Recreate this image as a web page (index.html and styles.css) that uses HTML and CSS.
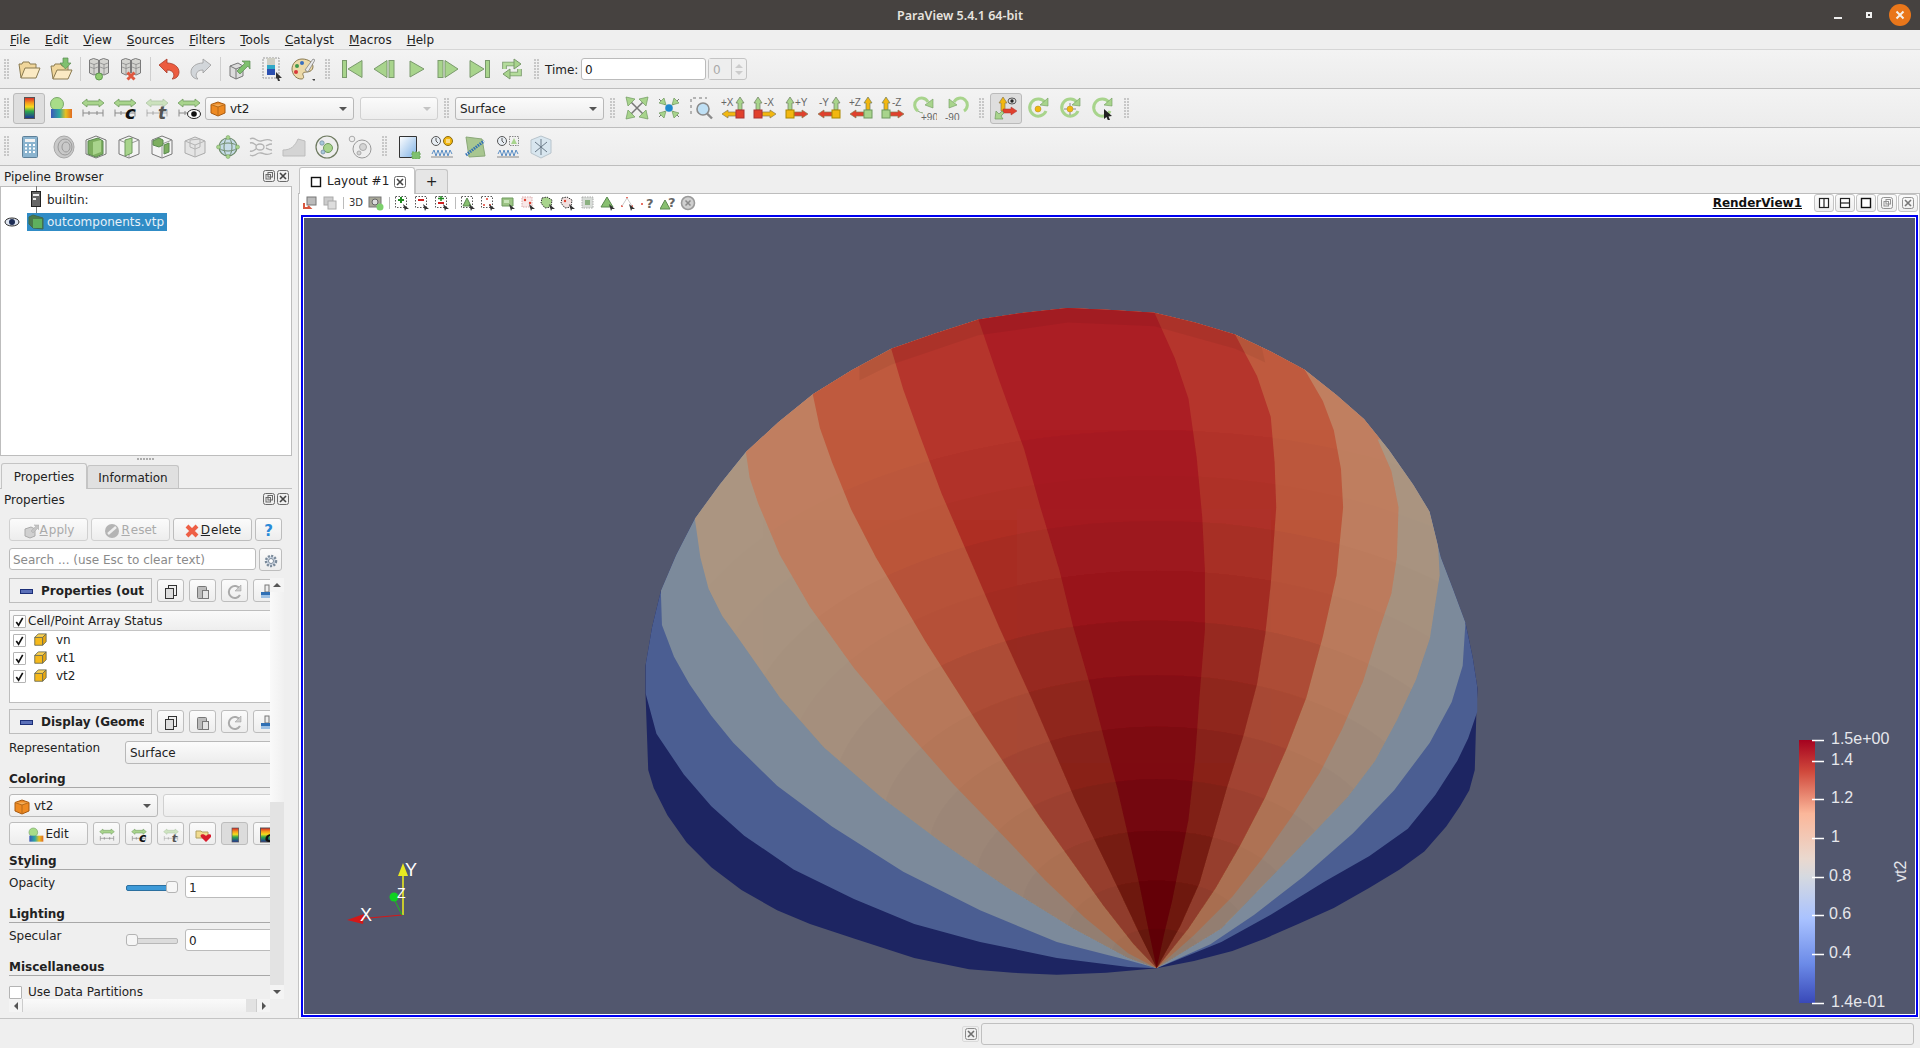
FILE: index.html
```html
<!DOCTYPE html>
<html lang="en">
<head>
<meta charset="utf-8">
<title>ParaView 5.4.1 64-bit</title>
<link rel="stylesheet" href="styles.css">
</head>
<body>
<svg class="defs" aria-hidden="true">
  <defs>
    <linearGradient id="rb" x1="0" y1="0" x2="0" y2="1"><stop offset="0" stop-color="#d8232a"/><stop offset=".25" stop-color="#f59a1c"/><stop offset=".45" stop-color="#f6dc1e"/><stop offset=".65" stop-color="#2ea84a"/><stop offset="1" stop-color="#1c2f9c"/></linearGradient>
    <linearGradient id="rbh" x1="0" y1="0" x2="1" y2="0"><stop offset="0" stop-color="#3a57b8"/><stop offset=".4" stop-color="#2ea8a0"/><stop offset=".7" stop-color="#e8c020"/><stop offset="1" stop-color="#e06a20"/></linearGradient>
    <linearGradient id="scale" x1="0" y1="0" x2="0" y2="1"><stop offset="0" stop-color="#a5021f"/><stop offset=".12" stop-color="#d0493c"/><stop offset=".28" stop-color="#fbb79a"/><stop offset=".45" stop-color="#ead8ce"/><stop offset=".52" stop-color="#d5d9e0"/><stop offset=".68" stop-color="#a9c2ff"/><stop offset=".85" stop-color="#6c8be8"/><stop offset="1" stop-color="#3949b8"/></linearGradient>
    <linearGradient id="blueg" x1="0" y1="0" x2="1" y2="1"><stop offset="0" stop-color="#ffffff"/><stop offset="1" stop-color="#7fb2e6"/></linearGradient>

    <g id="up" fill="currentColor" stroke="#6d7d60" stroke-width=".7"><polygon points="5,1 9,7 7,7 7,14 3,14 3,7 1,7"/></g>
    <g id="right" fill="currentColor" stroke="#8a7a50" stroke-width=".7"><polygon points="23,18 17,14 17,16 9,16 9,20 17,20 17,22"/></g>
    <g id="left" fill="currentColor" stroke="#8a7a50" stroke-width=".7"><polygon points="1,18 7,14 7,16 15,16 15,20 7,20 7,22"/></g>
    <g id="rule" fill="none" stroke="#8a8a8a" stroke-width="1"><path d="M2 17h20M2 13.500v7M8 15v4M16 15v4M22 13.500v7"/></g>
    <polygon id="dbl" fill="#a8d48c" stroke="#6f9a5e" stroke-width=".8" points="1,7 6,3 6,5 18,5 18,3 23,7 18,11 18,9 6,9 6,11"/>
    <path id="ring" fill="none" stroke="#a8d48c" stroke-width="3" d="M20 15a8.500 8.500 0 1 1-1-8.500"/>
    <polygon id="ringh" fill="#a8d48c" stroke="#6f9a5e" stroke-width=".6" points="22,2 22,10 14,9"/>

    <symbol id="folder-open" viewBox="0 0 24 24"><path d="M4 21 2 7h3l1-2h6l1 2h6v5" fill="#f0d69b" stroke="#8a7a50"/><path d="M4 21 8 11h15l-4 10z" fill="#fbeac4" stroke="#8a7a50"/></symbol>
    <symbol id="folder-in" viewBox="0 0 24 24"><path d="M4 22 2 9h3l1-2h6l1 2h6v4" fill="#f0d69b" stroke="#8a7a50"/><path d="M4 22 8 13h15l-4 9z" fill="#fbeac4" stroke="#8a7a50"/><path d="M14 1h5v5h3l-5.500 6L11 6h3z" fill="#7fc06f" stroke="#5a8a50" stroke-width=".7"/></symbol>
    <symbol id="srv" viewBox="0 0 24 24"><g fill="#d4d4d0" stroke="#7a7a7a"><path d="M2.500 3l4-1.500 5 1.500v13l-4.500 2-4.500-2z"/><path d="M12.500 3l4-1.500 5 1.500v13l-4.500 2-4.500-2z"/></g><path d="M3 6l4 1.500 4-1.500M13 6l4 1.500 4-1.500M3 10l4 1.500 4-1.500M13 10l4 1.500 4-1.500M7 7v10M17 7v10" fill="none" stroke="#8a8a8a" stroke-width=".8"/><circle cx="12" cy="19.500" r="3.500" fill="#90cc70" stroke="#5e9a50"/></symbol>
    <symbol id="srvx" viewBox="0 0 24 24"><g fill="#d4d4d0" stroke="#7a7a7a"><path d="M2.500 3l4-1.500 5 1.500v13l-4.500 2-4.500-2z"/><path d="M12.500 3l4-1.500 5 1.500v13l-4.500 2-4.500-2z"/></g><path d="M3 6l4 1.500 4-1.500M13 6l4 1.500 4-1.500M3 10l4 1.500 4-1.500M13 10l4 1.500 4-1.500M7 7v10M17 7v10" fill="none" stroke="#8a8a8a" stroke-width=".8"/><path d="M8.500 15.500l7 7M15.500 15.500l-7 7" stroke="#e0583f" stroke-width="3"/></symbol>
    <symbol id="undo" viewBox="0 0 24 24"><path d="M2 8 10 2v4c7 0 12 4 12 9 0 4-3 7-7 7 3-2 3-9-5-9v3z" fill="#ec5c40" stroke="#a83a28" stroke-width=".8"/></symbol>
    <symbol id="redo" viewBox="0 0 24 24"><path d="M22 8 14 2v4C7 6 2 10 2 15c0 4 3 7 7 7-3-2-3-9 5-9v3z" fill="#d2d6da" stroke="#9a9a9a" stroke-width=".8"/></symbol>
    <symbol id="state" viewBox="0 0 24 24"><path d="M3 9 11 6l5 3v10l-7 3-6-3z" fill="#dcdcdc" stroke="#777"/><path d="M3 9l6 3v10M9 12l7-3" fill="none" stroke="#777"/><path d="M10 14 18 6l-3-2h8v8l-2-3-8 8z" fill="#7fc06f" stroke="#5a8a50" stroke-width=".7"/></symbol>
    <symbol id="pick" viewBox="0 0 24 24"><rect x="4" y="1" width="16" height="20" fill="none" stroke="#999" stroke-dasharray="2 1"/><rect x="8" y="1" width="8" height="7" fill="#cfcfc4"/><rect x="8" y="8" width="8" height="10" fill="#2a4fb0"/><rect x="8" y="8" width="8" height="4" fill="#30a8c8"/><path d="M17 15l6 6-3 0 1 3-2 0-1-3-1 1z" fill="#333"/></symbol>
    <symbol id="palette" viewBox="0 0 24 24"><path d="M11 2C5 2 1 7 1 12s4 10 9 10c3 0 3-2 2-4s1-3 4-3 6-2 6-5c0-5-5-8-11-8z" fill="#ecd9a8" stroke="#8a7a50"/><circle cx="6" cy="9" r="2" fill="#3f9a4a"/><circle cx="11" cy="6" r="2" fill="#3a6fc0"/><circle cx="5" cy="15" r="2" fill="#d8383a"/><path d="M14 13 22 2l2 1-7 12z" fill="#e8e8e8" stroke="#777" stroke-width=".7"/><path d="M21 22h4l-2 2z" fill="#444"/></symbol>
    <symbol id="v-first" viewBox="0 0 24 24"><g fill="#a8d48c" stroke="#7a9a6c"><rect x="2.500" y="3.500" width="4" height="17"/><polygon points="22,3.500 8,12 22,20.500"/></g></symbol>
    <symbol id="v-prev" viewBox="0 0 24 24"><g fill="#a8d48c" stroke="#7a9a6c"><polygon points="15,3.500 2,12 15,20.500"/><rect x="17" y="3.500" width="5" height="17"/></g></symbol>
    <symbol id="v-play" viewBox="0 0 24 24"><polygon points="6,4 20,12 6,20" fill="#a8d48c" stroke="#7a9a6c"/></symbol>
    <symbol id="v-next" viewBox="0 0 24 24"><g fill="#a8d48c" stroke="#7a9a6c"><rect x="2" y="3.500" width="5" height="17"/><polygon points="9,3.500 22,12 9,20.500"/></g></symbol>
    <symbol id="v-last" viewBox="0 0 24 24"><g fill="#a8d48c" stroke="#7a9a6c"><polygon points="2,3.500 16,12 2,20.500"/><rect x="17.500" y="3.500" width="4" height="17"/></g></symbol>
    <symbol id="v-loop" viewBox="0 0 24 24"><g fill="none" stroke-linejoin="miter"><path d="M4.500 12V7H15M19.500 12v5H9" stroke="#7a9a6c" stroke-width="4.600"/><path d="M4.500 12V7H15M19.500 12v5H9" stroke="#b4dc9c" stroke-width="2.800"/></g><polygon points="14,2 21,7 14,12" fill="#a8d48c" stroke="#7a9a6c"/><polygon points="10,12 3,17 10,22" fill="#a8d48c" stroke="#7a9a6c"/></symbol>
    <symbol id="legend" viewBox="0 0 24 24"><rect x="7.500" y="1.500" width="10" height="21" fill="url(#rb)" stroke="#555"/></symbol>
    <symbol id="lut" viewBox="0 0 24 24"><circle cx="8" cy="8" r="6.500" fill="#a8dc88" stroke="#7aa86a"/><rect x="2" y="13" width="21" height="9" fill="url(#rbh)"/></symbol>
    <symbol id="r-a" viewBox="0 0 24 24"><use href="#dbl"/><use href="#rule"/></symbol>
    <symbol id="r-c" viewBox="0 0 24 24"><use href="#dbl"/><use href="#rule"/><text x="12" y="23" class="ic-c">c</text></symbol>
    <symbol id="r-t" viewBox="0 0 24 24"><use href="#dbl" opacity=".5"/><use href="#rule" opacity=".6"/><text x="13" y="23" class="ic-t">t</text></symbol>
    <symbol id="r-e" viewBox="0 0 24 24"><use href="#dbl"/><use href="#rule"/><ellipse cx="17" cy="18" rx="6.500" ry="4.500" fill="#fff" stroke="#222"/><circle cx="17" cy="18" r="2.800" fill="#111"/></symbol>
    <symbol id="reset" viewBox="0 0 24 24"><path d="M5 5l14 14M19 5 5 19" stroke="#777" stroke-width="1.500"/><g fill="#a8d48c" stroke="#6f9a5e" stroke-width=".7"><polygon points="1,1 10,3 3,10"/><polygon points="23,1 14,3 21,10"/><polygon points="1,23 3,14 10,21"/><polygon points="23,23 21,14 14,21"/></g></symbol>
    <symbol id="zoomin" viewBox="0 0 24 24"><path d="M2 3l6 6M22 3l-6 6M2 21l6-6M22 21l-6-6" stroke="#777"/><g fill="#a8d48c" stroke="#6f9a5e" stroke-width=".7"><polygon points="9,9 2,7 7,2"/><polygon points="15,9 22,7 17,2"/><polygon points="9,15 2,17 7,22"/><polygon points="15,15 22,17 17,22"/></g><circle cx="12" cy="12" r="3.800" fill="#2089cc"/></symbol>
    <symbol id="zoombox" viewBox="0 0 24 24"><path d="M2 18V2h16" fill="none" stroke="#777" stroke-dasharray="3 3"/><circle cx="14" cy="13" r="6" fill="#bfe0f5" stroke="#8a8a8a" stroke-width="1.600"/><path d="M18 17.500l5 5" stroke="#8a8a8a" stroke-width="2.400"/></symbol>
    <symbol id="ax-px" viewBox="0 0 24 24"><use href="#up" x="14" color="#a8d48c"/><use href="#left" color="#f2b70f"/><rect x="15" y="14" width="8" height="8" fill="#e0402c" stroke="#a33"/><text x="0" y="10" class="ic-l">+X</text></symbol>
    <symbol id="ax-nx" viewBox="0 0 24 24"><use href="#up" color="#a8d48c"/><use href="#right" color="#f2b70f"/><rect x="1" y="14" width="8" height="8" fill="#e0402c" stroke="#a33"/><text x="11" y="10" class="ic-l">-X</text></symbol>
    <symbol id="ax-py" viewBox="0 0 24 24"><use href="#up" color="#a8d48c"/><use href="#right" color="#e0402c"/><rect x="1" y="14" width="8" height="8" fill="#f2b70f" stroke="#a80"/><text x="10" y="10" class="ic-l">+Y</text></symbol>
    <symbol id="ax-ny" viewBox="0 0 24 24"><use href="#up" x="14" color="#a8d48c"/><use href="#left" color="#e0402c"/><rect x="15" y="14" width="8" height="8" fill="#f2b70f" stroke="#a80"/><text x="2" y="10" class="ic-l">-Y</text></symbol>
    <symbol id="ax-pz" viewBox="0 0 24 24"><use href="#up" x="14" color="#f2b70f"/><use href="#left" color="#e0402c"/><rect x="15" y="14" width="8" height="8" fill="#a8d48c" stroke="#6f9a5e"/><text x="0" y="10" class="ic-l">+Z</text></symbol>
    <symbol id="ax-nz" viewBox="0 0 24 24"><use href="#up" color="#f2b70f"/><use href="#right" color="#e0402c"/><rect x="1" y="14" width="8" height="8" fill="#a8d48c" stroke="#6f9a5e"/><text x="11" y="10" class="ic-l">-Z</text></symbol>
    <symbol id="rot-p" viewBox="0 0 24 24"><path d="M5 15a7 7 0 1 1 10-9" fill="none" stroke="#a8d48c" stroke-width="3"/><path d="M5 15a8.500 8.500 0 0 0 5 2" fill="none" stroke="#8aa87a"/><polygon points="20,3 20,12 12,9" fill="#a8d48c" stroke="#6f9a5e" stroke-width=".6"/><text x="8" y="25" class="ic-l">+90</text></symbol>
    <symbol id="rot-n" viewBox="0 0 24 24"><path d="M19 15a7 7 0 1 0-10-9" fill="none" stroke="#a8d48c" stroke-width="3"/><polygon points="4,3 4,12 12,9" fill="#a8d48c" stroke="#6f9a5e" stroke-width=".6"/><text x="0" y="25" class="ic-l">-90</text></symbol>
    <symbol id="orient" viewBox="0 0 24 24"><polygon points="9,1 13,7 11,7 11,15 7,15 7,7 5,7" fill="#f2b70f" stroke="#8a7a50" stroke-width=".7"/><polygon points="23,15 17,11 17,13 9,13 9,17 17,17 17,19" fill="#e0402c" stroke="#a33" stroke-width=".5"/><polygon points="1,23 2,15 5,18 8,15 10,17 7,20 9,23" fill="#a8d48c" stroke="#6f9a5e" stroke-width=".7"/><ellipse cx="18" cy="5" rx="4" ry="3" fill="#ddd" stroke="#555"/><circle cx="18" cy="5" r="1.700" fill="#222"/></symbol>
    <symbol id="rc1" viewBox="0 0 24 24"><use href="#ring"/><use href="#ringh"/><circle cx="12" cy="13" r="3" fill="#f2b70f" stroke="#a88a20" stroke-width=".5"/></symbol>
    <symbol id="rc2" viewBox="0 0 24 24"><use href="#ring"/><use href="#ringh"/><circle cx="12" cy="13" r="3" fill="#f2b70f" stroke="#a88a20" stroke-width=".5"/><path d="M6 13h3M15 13h3M12 7v3M12 16v3" stroke="#888"/></symbol>
    <symbol id="rc3" viewBox="0 0 24 24"><use href="#ring"/><use href="#ringh"/><path d="M14 13l8 7-3.500.5 1.500 3.500-2 .5-1.500-3.500-2.500 2z" fill="#222"/></symbol>
    <symbol id="calc" viewBox="0 0 24 24"><rect x="4.500" y="1.500" width="15" height="21" rx="1" fill="#8bb4cf" stroke="#5d7f98"/><rect x="7" y="4" width="10" height="3" fill="#f2f2f2"/><path d="M7 10h2M11 10h2M15 10h2M7 13.500h2M11 13.500h2M15 13.500h2M7 17h2M11 17h2M15 17h2" stroke="#fff" stroke-width="2"/></symbol>
    <symbol id="contour" viewBox="0 0 24 24"><ellipse cx="13" cy="12" rx="10" ry="11" fill="#c9c9c9" stroke="#a8a8a8"/><ellipse cx="14" cy="12" rx="7" ry="8" fill="none" stroke="#9a9a9a"/><ellipse cx="15" cy="12" rx="4" ry="5" fill="none" stroke="#9a9a9a"/></symbol>
    <symbol id="clip" viewBox="0 0 24 24"><path d="M12 1 22 5v14L12 23 2 19V5z" fill="#f4f4f4" stroke="#777"/><path d="M4 6 14 3l5 3v13l-7 3-8-3z" fill="#7dae5f" stroke="#5a8a50"/><path d="M9 7l8-2v12l-8 3z" fill="#a8d48c"/></symbol>
    <symbol id="slice" viewBox="0 0 24 24"><path d="M12 1 22 5v14L12 23 2 19V5z" fill="#f4f4f4" stroke="#777"/><path d="M2 5l10 4 10-4M12 9v14" fill="none" stroke="#999"/><path d="M8 5 15 3v15l-7 3z" fill="#a8d48c" stroke="#6f9a5e"/></symbol>
    <symbol id="extract" viewBox="0 0 24 24"><path d="M12 1 22 5v14L12 23 2 19V5z" fill="#f4f4f4" stroke="#777"/><path d="M2 5l10 4 10-4M12 9v14" fill="none" stroke="#999"/><path d="M3 6l6-3 4 2v5l-4 2-6-2z" fill="#7dae5f" stroke="#5a8a50"/><path d="M14 10l5-2v9l-5 2z" fill="#7dae5f" stroke="#5a8a50"/></symbol>
    <symbol id="threshold" viewBox="0 0 24 24"><path d="M12 2 22 6v12l-10 4L2 18V6z" fill="#e4e4e4" stroke="#aaa"/><path d="M2 6l10 4 10-4M12 10v12M7 5l10-1v8l-5 2-5-2z" fill="none" stroke="#b4b4b4"/></symbol>
    <symbol id="globe" viewBox="0 0 24 24"><circle cx="12" cy="12" r="9" fill="#c6dce8" stroke="#6f8a6c" stroke-width="1.200"/><ellipse cx="12" cy="12" rx="4" ry="9" fill="none" stroke="#6f8a6c"/><ellipse cx="12" cy="12" rx="9" ry="4" fill="none" stroke="#6f8a6c"/><g fill="#a8d48c" stroke="#6f9a5e" stroke-width=".5"><circle cx="12" cy="2.500" r="2"/><circle cx="12" cy="21.500" r="2"/><circle cx="2.500" cy="12" r="2"/><circle cx="21.500" cy="12" r="2"/></g></symbol>
    <symbol id="waves" viewBox="0 0 24 24"><g fill="none" stroke="#b4b4b4" stroke-width="1.400"><path d="M1 4c5-3 6 3 11 2s6-3 11 0M1 20c5 3 6-3 11-2s6 3 11 0M1 8c3-1 4 1 6 2M1 16c3 1 4-1 6-2M23 9c-3 0-4 1-6 2M23 15c-3 0-4-1-6-2"/><ellipse cx="11" cy="12" rx="4" ry="3"/></g></symbol>
    <symbol id="warp" viewBox="0 0 24 24"><path d="M1 21v-6c8 0 12-4 15-11l7 2v15z" fill="#d4d4d4" stroke="#bdbdbd"/></symbol>
    <symbol id="glyphs" viewBox="0 0 24 24"><circle cx="12" cy="12" r="11" fill="#eee" stroke="#6e7a60" stroke-width="1.200"/><circle cx="13" cy="13" r="4.500" fill="#a8d48c" stroke="#6f9a5e"/><circle cx="7" cy="8" r="2.200" fill="#a8c8dc" stroke="#6f8a9a" stroke-width=".7"/><circle cx="8" cy="17" r="2" fill="#a8c8dc" stroke="#6f8a9a" stroke-width=".7"/></symbol>
    <symbol id="glyphs2" viewBox="0 0 24 24"><circle cx="14" cy="14" r="9" fill="#eee" stroke="#999"/><circle cx="4" cy="4" r="2.800" fill="#eee" stroke="#aaa"/><circle cx="15" cy="12" r="3.500" fill="#d4d4d4" stroke="#aaa"/><circle cx="11" cy="18" r="2" fill="#d4d4d4" stroke="#aaa"/></symbol>
    <symbol id="find" viewBox="0 0 24 24"><path d="M2.500 1.500h17v16h-4v5h-13z" fill="url(#blueg)" stroke="#333"/><rect x="15" y="17" width="8" height="7" fill="#7fc06f" stroke="#6aa55c" stroke-dasharray="2 1"/></symbol>
    <symbol id="plot1" viewBox="0 0 24 24"><circle cx="6" cy="6" r="4.500" fill="#e8eef4" stroke="#555"/><path d="M6 3v3l2 2" stroke="#555" fill="none"/><circle cx="18" cy="6" r="4.500" fill="#f2b70f" stroke="#8a6a10"/><rect x="16" y="4" width="4" height="4" fill="#fff" opacity=".5"/><path d="M1 22h22" stroke="#8a8a8a"/><path d="M2 19l2-4 2 6 2-6 2 6 2-6 2 6 2-6 2 6 2-6 2 4" fill="none" stroke="#5b8ec4"/></symbol>
    <symbol id="plot2" viewBox="0 0 24 24"><polygon points="3,2 19,4 22,21 6,22" fill="#a8c690" stroke="#8aa878"/><path d="M3 20 21 6" stroke="#2f6fb4" stroke-width="3" stroke-dasharray="1.500 1"/></symbol>
    <symbol id="plot3" viewBox="0 0 24 24"><circle cx="6" cy="6" r="4.500" fill="#e8eef4" stroke="#555"/><path d="M6 3v3l2 2" stroke="#555" fill="none"/><rect x="13.500" y="1.500" width="9" height="9" fill="none" stroke="#888" stroke-dasharray="1.500 1"/><polygon points="18,3 21,9 15,9" fill="#a8d48c"/><path d="M1 22h22" stroke="#8a8a8a"/><path d="M2 19l2-4 2 6 2-6 2 6 2-6 2 6 2-6 2 6 2-6 2 4" fill="none" stroke="#5b8ec4"/></symbol>
    <symbol id="frost" viewBox="0 0 24 24"><path d="M12 1 22 5v13l-10 5L2 18V5z" fill="#d8e6ef" stroke="#b8c4cc"/><path d="M6 7l12 10M18 7 6 17M12 4v16" stroke="#6a7a88"/></symbol>

    <symbol id="floaticon" viewBox="0 0 12 12"><rect x=".5" y=".5" width="11" height="11" rx="2" fill="none" stroke="#6a6a6a"/><rect x="3" y="4.500" width="4.500" height="4.500" fill="none" stroke="#6a6a6a"/><rect x="5" y="2.500" width="4.500" height="4.500" fill="none" stroke="#6a6a6a"/></symbol>
    <symbol id="closeicon" viewBox="0 0 12 12"><rect x=".5" y=".5" width="11" height="11" rx="2" fill="none" stroke="#6a6a6a"/><path d="M3 3l6 6M9 3 3 9" stroke="#444" stroke-width="1.600"/></symbol>
    <symbol id="check" viewBox="0 0 12 12"><path d="M2.500 6.500 5 10l4.500-8" fill="none" stroke="#111" stroke-width="1.800"/></symbol>
    <symbol id="arr" viewBox="0 0 16 16"><path d="M2 5h9v9H2z" fill="#f6b91a" stroke="#6a6a50"/><path d="M2 5l4-4h9L11 5z" fill="#fad050" stroke="#6a6a50"/><path d="M11 5l4-4v9l-4 4z" fill="#e8a810" stroke="#6a6a50"/></symbol>
    <symbol id="orangecube" viewBox="0 0 16 16"><path d="M8 1 15 3.500v8.500L8 15 1 12V3.500z" fill="#ee8a22" stroke="#a85a10"/><path d="M1 3.500 8 6l7-2.500z" fill="#f4b060"/><path d="M1 3.500 8 6l7-2.500M8 6v9" fill="none" stroke="#b86a18"/></symbol>
    <symbol id="eye" viewBox="0 0 16 12"><ellipse cx="8" cy="6" rx="7" ry="4" fill="#dfe6f2" stroke="#2a2a2a"/><circle cx="8" cy="6" r="3" fill="#1d2d55"/></symbol>
    <symbol id="srvbox" viewBox="0 0 12 16"><rect x="1.500" y=".5" width="9" height="15" fill="#666" stroke="#222"/><rect x="3" y="3" width="6" height="2" fill="#eee"/><rect x="3" y="7" width="3" height="2" fill="#eee"/></symbol>
    <symbol id="greencube" viewBox="0 0 16 16"><path d="M5 1 15 4v11l-10-1L1 10V3z" fill="#4a7a4a" stroke="#3f6a4f"/><rect x="5" y="5" width="9" height="9" fill="#5eb05e"/></symbol>
    <symbol id="edge" viewBox="0 0 12 12"><rect x="1.500" y="1.500" width="9" height="9" fill="#fff" stroke="#111" stroke-width="1.400"/></symbol>
    <symbol id="split-h" viewBox="0 0 12 12"><rect x="1.500" y="1.500" width="9" height="9" fill="#fff" stroke="#222" stroke-width="1.200"/><path d="M6 1.500v9" stroke="#222" stroke-width="1.200"/></symbol>
    <symbol id="split-v" viewBox="0 0 12 12"><rect x="1.500" y="1.500" width="9" height="9" fill="#fff" stroke="#222" stroke-width="1.200"/><path d="M1.500 6h9" stroke="#222" stroke-width="1.200"/></symbol>
    <symbol id="copy" viewBox="0 0 16 16"><rect x="5.500" y="1.500" width="8" height="10" fill="#eee" stroke="#333"/><rect x="2.500" y="4.500" width="8" height="10" fill="#ddd" stroke="#333"/></symbol>
    <symbol id="paste" viewBox="0 0 16 16"><rect x="2.500" y="2.500" width="9" height="12" rx="1" fill="#bbb" stroke="#777"/><rect x="7.500" y="6.500" width="6" height="8" fill="#e4e4e4" stroke="#777"/></symbol>
    <symbol id="reload" viewBox="0 0 16 16"><path d="M13 11a6 6 0 1 1 0-6" fill="none" stroke="#aaa" stroke-width="2"/><path d="M14 1v6H8z" fill="#ccc" stroke="#999" stroke-width=".5"/></symbol>
    <symbol id="brush" viewBox="0 0 16 16"><rect x="6" y="1" width="4" height="7" fill="#eee" stroke="#777"/><rect x="2" y="8" width="12" height="3" fill="#2f6fb4"/><rect x="2" y="11" width="12" height="3" fill="#9cc0e4"/></symbol>
    <symbol id="gear" viewBox="0 0 16 16"><circle cx="8" cy="8" r="5" fill="#d4dce8" stroke="#7a8a9a" stroke-width="2.500" stroke-dasharray="2 1.300"/><circle cx="8" cy="8" r="2.500" fill="#fff" stroke="#7a8a9a"/></symbol>
    <symbol id="heart" viewBox="0 0 16 16"><path d="M1 4h5l1 1h6v6H1z" fill="#f2dc90" stroke="#b0a060"/><path d="M11 15 6 10c-2-3 3-4 5-1 2-3 7-2 5 1z" fill="#d81c2c"/></symbol>
    <symbol id="legendc" viewBox="0 0 16 16"><rect x="1.500" y="1" width="13" height="14" fill="url(#rb)" stroke="#555"/><text x="6" y="15" class="ic-c2">c</text></symbol>
    <symbol id="apply" viewBox="0 0 16 16"><path d="M2 6l6-2 4 2v7l-5 2-5-2z" fill="#d0d0d0" stroke="#aaa"/><path d="M8 8l5-5-2-1h5v5l-1-2-5 5z" fill="#c4c4c4" stroke="#aaa" stroke-width=".5"/></symbol>
    <symbol id="reseticon" viewBox="0 0 16 16"><circle cx="8" cy="8" r="7" fill="#b4b4b4"/><path d="M4 11l8-7" stroke="#eee" stroke-width="2.500"/></symbol>
    <symbol id="del" viewBox="0 0 16 16"><path d="M3 3l10 10M13 3 3 13" stroke="#ee5f45" stroke-width="4"/></symbol>

    <symbol id="s-cam" viewBox="0 0 16 16"><rect x="5" y="2" width="9" height="8" fill="#bbb" stroke="#777"/><path d="M2 8v5h6l-2-2" fill="none" stroke="#d8583f" stroke-width="2"/></symbol>
    <symbol id="s-cam2" viewBox="0 0 16 16"><rect x="2" y="2" width="9" height="8" fill="#ccc" stroke="#aaa"/><rect x="6" y="6" width="8" height="8" fill="#ddd" stroke="#aaa"/></symbol>
    <symbol id="s-shot" viewBox="0 0 16 16"><rect x="1" y="2" width="12" height="10" fill="#a8a898" stroke="#777"/><circle cx="7" cy="7" r="3" fill="#ddd" stroke="#666"/><circle cx="12" cy="12" r="3.500" fill="#7cd06c"/></symbol>
    <symbol id="s-sel" viewBox="0 0 16 16"><rect x="1.500" y="1.500" width="11" height="11" fill="none" stroke="#555" stroke-dasharray="1.500 1.500"/><path d="M4 5h6" stroke="#208a20" stroke-width="2"/><path d="M7 2v6" stroke="#208a20" stroke-width="2"/><path d="M9 9l6 5-3 0-1 2z" fill="#333"/></symbol>
    <symbol id="s-sel2" viewBox="0 0 16 16"><rect x="1.500" y="1.500" width="11" height="11" fill="none" stroke="#555" stroke-dasharray="1.500 1.500"/><path d="M4 5h6" stroke="#d02020" stroke-width="2"/><path d="M9 9l6 5-3 0-1 2z" fill="#333"/></symbol>
    <symbol id="s-sel3" viewBox="0 0 16 16"><rect x="1.500" y="1.500" width="11" height="11" fill="none" stroke="#555" stroke-dasharray="1.500 1.500"/><path d="M4 3.500h6M7 1v5" stroke="#208a20" stroke-width="1.500"/><path d="M4 8h6" stroke="#d02020" stroke-width="2"/><path d="M9 9l6 5-3 0-1 2z" fill="#333"/></symbol>
    <symbol id="s-tri" viewBox="0 0 16 16"><rect x="1.500" y="1.500" width="11" height="11" fill="none" stroke="#555" stroke-dasharray="1.500 1.500"/><polygon points="7,3 11,11 3,11" fill="#88c070" stroke="#5a8a50"/><path d="M9 9l6 5-3 0-1 2z" fill="#333"/></symbol>
    <symbol id="s-pts" viewBox="0 0 16 16"><rect x="1.500" y="1.500" width="11" height="11" fill="none" stroke="#555" stroke-dasharray="1.500 1.500"/><circle cx="7" cy="4" r="1" fill="#e04030"/><circle cx="4" cy="10" r="1" fill="#e04030"/><circle cx="10" cy="10" r="1" fill="#e04030"/><path d="M9 9l6 5-3 0-1 2z" fill="#333"/></symbol>
    <symbol id="s-block" viewBox="0 0 16 16"><path d="M2 3h11v8H2z" fill="#9cc484" stroke="#6f9a5e"/><path d="M4 5h5v3H4z" fill="#c8e4b8"/><path d="M9 9l6 5-3 0-1 2z" fill="#333"/></symbol>
    <symbol id="s-bpt" viewBox="0 0 16 16"><rect x="2" y="2" width="10" height="10" fill="#f8e8e8" stroke="#d8a8a8" stroke-dasharray="1.500 1"/><circle cx="5" cy="5" r="1.200" fill="#e04030"/><circle cx="10" cy="8" r="1.200" fill="#e04030"/><path d="M9 9l6 5-3 0-1 2z" fill="#333"/></symbol>
    <symbol id="s-poly" viewBox="0 0 16 16"><path d="M2 3l5-1 5 3-1 7-6 1-4-5z" fill="#a8d48c" stroke="#333" stroke-dasharray="1.500 1"/><path d="M9 9l6 5-3 0-1 2z" fill="#333"/></symbol>
    <symbol id="s-poly2" viewBox="0 0 16 16"><path d="M2 3l5-1 5 3-1 7-6 1-4-5z" fill="#f0e0e0" stroke="#333" stroke-dasharray="1.500 1"/><circle cx="5" cy="6" r="1.200" fill="#e04030"/><path d="M9 9l6 5-3 0-1 2z" fill="#333"/></symbol>
    <symbol id="s-gray" viewBox="0 0 16 16"><rect x="2" y="2" width="11" height="11" fill="#d8dcd8" stroke="#aaa" stroke-dasharray="1.500 1"/><rect x="5" y="5" width="5" height="5" fill="#8ab080"/></symbol>
    <symbol id="s-a" viewBox="0 0 16 16"><polygon points="7,2 13,12 1,12" fill="#88c070" stroke="#5a8a50"/><path d="M9 9l6 5-3 0-1 2z" fill="#333"/></symbol>
    <symbol id="s-b" viewBox="0 0 16 16"><circle cx="7" cy="3" r="1" fill="#e04030"/><circle cx="2" cy="11" r="1" fill="#e04030"/><circle cx="12" cy="11" r="1" fill="#e04030"/><path d="M7 3 2 11M7 3l5 8" stroke="#ccc"/><path d="M9 9l6 5-3 0-1 2z" fill="#333"/></symbol>
    <symbol id="s-q" viewBox="0 0 16 16"><circle cx="2" cy="9" r="1" fill="#e04030"/><text x="6" y="13" class="ic-q">?</text></symbol>
    <symbol id="s-tq" viewBox="0 0 16 16"><polygon points="5,5 10,14 0,14" fill="#88c070" stroke="#5a8a50"/><text x="8" y="12" class="ic-q">?</text></symbol>
    <symbol id="s-x" viewBox="0 0 16 16"><circle cx="8" cy="8" r="6.500" fill="#cfcfcf" stroke="#9a9a9a" stroke-width="1.600"/><path d="M5.500 5.500l5 5M10.500 5.500l-5 5" stroke="#8a8a8a" stroke-width="1.500"/></symbol>
  </defs>
</svg>

<div class="app">
  <header class="titlebar">
    <span class="title-text">ParaView 5.4.1 64-bit</span>
    <div class="winbtns">
      <span class="win-min"></span>
      <span class="win-max"></span>
      <span class="win-close"><svg viewBox="0 0 12 12"><path d="M2.500 2.500l7 7M9.500 2.500l-7 7" stroke="#f5f0ea" stroke-width="2"/></svg></span>
    </div>
  </header>

  <nav class="menubar">
    <span><u>F</u>ile</span><span><u>E</u>dit</span><span><u>V</u>iew</span><span><u>S</u>ources</span><span><u>F</u>ilters</span><span><u>T</u>ools</span><span><u>C</u>atalyst</span><span><u>M</u>acros</span><span><u>H</u>elp</span>
  </nav>

  <div class="toolbar">
    <span class="grip first"></span>
    <span class="tb"><svg class="i"><use href="#folder-open"/></svg></span>
    <span class="tb"><svg class="i"><use href="#folder-in"/></svg></span>
    <span class="sep"></span>
    <span class="tb"><svg class="i"><use href="#srv"/></svg></span>
    <span class="tb"><svg class="i"><use href="#srvx"/></svg></span>
    <span class="sep"></span>
    <span class="tb"><svg class="i"><use href="#undo"/></svg></span>
    <span class="tb"><svg class="i"><use href="#redo"/></svg></span>
    <span class="sep"></span>
    <span class="tb"><svg class="i"><use href="#state"/></svg></span>
    <span class="tb"><svg class="i"><use href="#pick"/></svg></span>
    <span class="tb"><svg class="i"><use href="#palette"/></svg></span>
    <span class="grip"></span>
    <span class="tb"><svg class="i"><use href="#v-first"/></svg></span>
    <span class="tb"><svg class="i"><use href="#v-prev"/></svg></span>
    <span class="tb"><svg class="i"><use href="#v-play"/></svg></span>
    <span class="tb"><svg class="i"><use href="#v-next"/></svg></span>
    <span class="tb"><svg class="i"><use href="#v-last"/></svg></span>
    <span class="tb"><svg class="i"><use href="#v-loop"/></svg></span>
    <span class="grip"></span>
    <span class="time-label">Time:</span>
    <span class="field time-field">0</span>
    <span class="spin"><span class="spin-val">0</span><span class="spin-arrows"><i class="up"></i><i class="down"></i></span></span>
  </div>

  <div class="toolbar">
    <span class="grip first"></span>
    <span class="tb on"><svg class="i"><use href="#legend"/></svg></span>
    <span class="tb"><svg class="i"><use href="#lut"/></svg></span>
    <span class="tb"><svg class="i"><use href="#r-a"/></svg></span>
    <span class="tb"><svg class="i"><use href="#r-c"/></svg></span>
    <span class="tb"><svg class="i"><use href="#r-t"/></svg></span>
    <span class="tb"><svg class="i"><use href="#r-e"/></svg></span>
    <span class="combo w149"><svg class="i16"><use href="#orangecube"/></svg>vt2<i class="caret"></i></span>
    <span class="combo w78 off"><i class="caret"></i></span>
    <span class="grip"></span>
    <span class="combo w149">Surface<i class="caret"></i></span>
    <span class="grip"></span>
    <span class="tb"><svg class="i"><use href="#reset"/></svg></span>
    <span class="tb"><svg class="i"><use href="#zoomin"/></svg></span>
    <span class="tb"><svg class="i"><use href="#zoombox"/></svg></span>
    <span class="tb"><svg class="i"><use href="#ax-px"/></svg></span>
    <span class="tb"><svg class="i"><use href="#ax-nx"/></svg></span>
    <span class="tb"><svg class="i"><use href="#ax-py"/></svg></span>
    <span class="tb"><svg class="i"><use href="#ax-ny"/></svg></span>
    <span class="tb"><svg class="i"><use href="#ax-pz"/></svg></span>
    <span class="tb"><svg class="i"><use href="#ax-nz"/></svg></span>
    <span class="tb"><svg class="i"><use href="#rot-p"/></svg></span>
    <span class="tb"><svg class="i"><use href="#rot-n"/></svg></span>
    <span class="grip"></span>
    <span class="tb on"><svg class="i"><use href="#orient"/></svg></span>
    <span class="tb"><svg class="i"><use href="#rc1"/></svg></span>
    <span class="tb"><svg class="i"><use href="#rc2"/></svg></span>
    <span class="tb"><svg class="i"><use href="#rc3"/></svg></span>
    <span class="grip"></span>
  </div>

  <div class="toolbar last">
    <span class="grip first"></span>
    <span class="tb wide"><svg class="i"><use href="#calc"/></svg></span>
    <span class="tb wide"><svg class="i"><use href="#contour"/></svg></span>
    <span class="tb wide"><svg class="i"><use href="#clip"/></svg></span>
    <span class="tb wide"><svg class="i"><use href="#slice"/></svg></span>
    <span class="tb wide"><svg class="i"><use href="#extract"/></svg></span>
    <span class="tb wide"><svg class="i"><use href="#threshold"/></svg></span>
    <span class="tb wide"><svg class="i"><use href="#globe"/></svg></span>
    <span class="tb wide"><svg class="i"><use href="#waves"/></svg></span>
    <span class="tb wide"><svg class="i"><use href="#warp"/></svg></span>
    <span class="tb wide"><svg class="i"><use href="#glyphs"/></svg></span>
    <span class="tb wide"><svg class="i"><use href="#glyphs2"/></svg></span>
    <span class="grip g16"></span>
    <span class="tb wide"><svg class="i"><use href="#find"/></svg></span>
    <span class="tb wide"><svg class="i"><use href="#plot1"/></svg></span>
    <span class="tb wide"><svg class="i"><use href="#plot2"/></svg></span>
    <span class="tb wide"><svg class="i"><use href="#plot3"/></svg></span>
    <span class="tb wide"><svg class="i"><use href="#frost"/></svg></span>
  </div>

  <main class="workspace">
    <aside class="leftdock">
      <div class="dock-title">Pipeline Browser<span class="dock-icons"><svg class="i12"><use href="#floaticon"/></svg><svg class="i12"><use href="#closeicon"/></svg></span></div>
      <div class="tree">
        <div class="tree-row">
          <span class="tree-line"></span>
          <svg class="tree-srv"><use href="#srvbox"/></svg><span class="tree-label">builtin:</span>
        </div>
        <div class="tree-row selrow">
          <svg class="tree-eye"><use href="#eye"/></svg>
          <span class="tree-sel"><svg class="i16"><use href="#greencube"/></svg>outcomponents.vtp</span>
        </div>
      </div>
      <div class="splitter"></div>
      <div class="tabs">
        <span class="tab active">Properties</span>
        <span class="tab">Information</span>
      </div>
      <div class="dock-title second">Properties<span class="dock-icons"><svg class="i12"><use href="#floaticon"/></svg><svg class="i12"><use href="#closeicon"/></svg></span></div>

      <div class="action-row">
        <span class="btn w79 off"><svg class="i16"><use href="#apply"/></svg><u>A</u>pply</span>
        <span class="btn w79 off"><svg class="i16"><use href="#reseticon"/></svg><u>R</u>eset</span>
        <span class="btn w79"><svg class="i16"><use href="#del"/></svg><u>D</u>elete</span>
        <span class="btn w27 help">?</span>
      </div>
      <div class="search-row">
        <span class="field search">Search ... (use Esc to clear text)</span>
        <span class="btn w23 h23"><svg class="i16"><use href="#gear"/></svg></span>
      </div>

      <div class="props-area">
        <div class="props-col">
          <div class="props-scroll">
            <div class="props-inner">
              <div class="section">
                <span class="section-btn"><i class="minus"></i><b>Properties (out</b></span>
                <span class="btn w27"><svg class="i16"><use href="#copy"/></svg></span>
                <span class="btn w27"><svg class="i16"><use href="#paste"/></svg></span>
                <span class="btn w27"><svg class="i16"><use href="#reload"/></svg></span>
                <span class="btn w27"><svg class="i16"><use href="#brush"/></svg></span>
              </div>
              <div class="table">
                <div class="thead"><span class="cb"><svg><use href="#check"/></svg></span>Cell/Point Array Status</div>
                <div class="trow"><span class="cb"><svg><use href="#check"/></svg></span><svg class="i14"><use href="#arr"/></svg><span class="tname">vn</span></div>
                <div class="trow"><span class="cb"><svg><use href="#check"/></svg></span><svg class="i14"><use href="#arr"/></svg><span class="tname">vt1</span></div>
                <div class="trow"><span class="cb"><svg><use href="#check"/></svg></span><svg class="i14"><use href="#arr"/></svg><span class="tname">vt2</span></div>
              </div>
              <div class="section s2">
                <span class="section-btn"><i class="minus"></i><b>Display (Geome</b></span>
                <span class="btn w27"><svg class="i16"><use href="#copy"/></svg></span>
                <span class="btn w27"><svg class="i16"><use href="#paste"/></svg></span>
                <span class="btn w27"><svg class="i16"><use href="#reload"/></svg></span>
                <span class="btn w27"><svg class="i16"><use href="#brush"/></svg></span>
              </div>
              <div class="form-row r-repr"><span class="form-label">Representation</span><span class="combo w160">Surface<i class="caret"></i></span></div>
              <div class="group">Coloring</div>
              <div class="color-row"><span class="combo w149"><svg class="i16"><use href="#orangecube"/></svg>vt2<i class="caret"></i></span><span class="combo w149 off"><i class="caret"></i></span></div>
              <div class="edit-row">
                <span class="btn w79"><svg class="i16"><use href="#lut"/></svg>Edit</span>
                <span class="btn w27"><svg class="i16"><use href="#r-a"/></svg></span>
                <span class="btn w27"><svg class="i16"><use href="#r-c"/></svg></span>
                <span class="btn w27"><svg class="i16"><use href="#r-t"/></svg></span>
                <span class="btn w27"><svg class="i16"><use href="#heart"/></svg></span>
                <span class="btn w27 on"><svg class="i16"><use href="#legend"/></svg></span>
                <span class="btn w27"><svg class="i16"><use href="#legendc"/></svg></span>
              </div>
              <div class="group">Styling</div>
              <div class="form-row"><span class="form-label">Opacity</span><span class="slider full"><i></i></span><span class="field num">1</span></div>
              <div class="group">Lighting</div>
              <div class="form-row"><span class="form-label">Specular</span><span class="slider zero"><i></i></span><span class="field num">0</span></div>
              <div class="group">Miscellaneous</div>
              <div class="check-row"><span class="cb"></span>Use Data Partitions</div>
            </div>
          </div>
          <div class="hbar"><span class="sb-btn"><i class="tri-l"></i></span><span class="hthumb"></span><span class="htrough"></span><span class="sb-btn"><i class="tri-r"></i></span></div>
        </div>
        <div class="vbar"><span class="sb-btn top"><i class="tri-u"></i></span><span class="vthumb"></span><span class="vtrough"></span><span class="sb-btn"><i class="tri-d"></i></span></div>
      </div>
    </aside>

    <section class="center">
      <div class="layout-tabs">
        <span class="ltab active"><svg class="i12b"><use href="#edge"/></svg>Layout #1<svg class="i12"><use href="#closeicon"/></svg></span>
        <span class="ltab plus">+</span>
      </div>
      <div class="view-panel">
        <div class="view-bar">
          <span class="vb"><svg class="i16"><use href="#s-cam"/></svg></span>
          <span class="vb"><svg class="i16"><use href="#s-cam2"/></svg></span>
          <span class="vsep"></span>
          <span class="vb txt">3D</span>
          <span class="vb"><svg class="i16"><use href="#s-shot"/></svg></span>
          <span class="vsep"></span>
          <span class="vb"><svg class="i16"><use href="#s-sel"/></svg></span>
          <span class="vb"><svg class="i16"><use href="#s-sel2"/></svg></span>
          <span class="vb"><svg class="i16"><use href="#s-sel3"/></svg></span>
          <span class="vsep"></span>
          <span class="vb"><svg class="i16"><use href="#s-tri"/></svg></span>
          <span class="vb"><svg class="i16"><use href="#s-pts"/></svg></span>
          <span class="vb"><svg class="i16"><use href="#s-block"/></svg></span>
          <span class="vb"><svg class="i16"><use href="#s-bpt"/></svg></span>
          <span class="vb"><svg class="i16"><use href="#s-poly"/></svg></span>
          <span class="vb"><svg class="i16"><use href="#s-poly2"/></svg></span>
          <span class="vb"><svg class="i16"><use href="#s-gray"/></svg></span>
          <span class="vb"><svg class="i16"><use href="#s-a"/></svg></span>
          <span class="vb"><svg class="i16"><use href="#s-b"/></svg></span>
          <span class="vb"><svg class="i16"><use href="#s-q"/></svg></span>
          <span class="vb"><svg class="i16"><use href="#s-tq"/></svg></span>
          <span class="vb"><svg class="i16"><use href="#s-x"/></svg></span>
          <span class="view-name">RenderView1</span>
          <span class="vbtn"><svg class="i12"><use href="#split-h"/></svg></span>
          <span class="vbtn"><svg class="i12"><use href="#split-v"/></svg></span>
          <span class="vbtn"><svg class="i12"><use href="#edge"/></svg></span>
          <span class="vbtn dim"><svg class="i12"><use href="#floaticon"/></svg></span>
          <span class="vbtn dim"><svg class="i12"><use href="#closeicon"/></svg></span>
        </div>
        <div class="viewport">
          <svg class="scene" viewBox="304 218 1611 796" preserveAspectRatio="none">
            <defs>
              <polygon id="outline" points="780,40 860,44 938,50 1012,72 1085,98 1150,136 1212,176 1270,232 1320,285 1365,352 1410,430 1440,490 1460,590 1482,660 1505,735 1518,810 1527,880 1525,930 1522,1060 1512,1105 1495,1140 1470,1185 1430,1240 1385,1280 1330,1320 1265,1365 1200,1400 1140,1432 1080,1460 1010,1482 942,1498 850,1508 760,1512 680,1508 600,1500 500,1475 390,1432 310,1400 250,1370 185,1325 130,1275 85,1220 50,1160 25,1100 15,1060 10,890 10,830 22,745 38,665 66,585 100,505 145,430 193,358 252,292 315,230 385,178 458,130 535,97 617,65 700,50"/>
              <clipPath id="cp-surface"><polygon points="780,40 860,44 938,50 1012,72 1085,98 1150,136 1212,176 1270,232 1320,285 1365,352 1410,430 1440,490 1460,590 1482,660 1505,735 1518,810 1527,880 1527,930 1510,990 1490,1040 1450,1115 1400,1190 1330,1250 1250,1305 1150,1380 1060,1440 942,1498 890,1495 760,1475 620,1440 500,1400 390,1345 280,1280 190,1205 130,1140 80,1070 30,980 10,890 10,830 22,745 38,665 66,585 100,505 145,430 193,358 252,292 315,230 385,178 458,130 535,97 617,65 700,50"/></clipPath>
              <polygon id="b1" points="-150,-50 -150,665 38,665 40,740 62,810 90,870 130,940 170,1000 250,1095 350,1185 480,1285 620,1370 760,1440 890,1480 942,1498 1040,1445 1120,1380 1210,1295 1300,1200 1375,1105 1440,1000 1480,910 1500,830 1505,735 1700,735 1700,-50"/>
              <polygon id="b2" points="-150,-50 -150,505 100,505 110,590 125,660 150,720 180,770 255,900 335,1010 440,1120 550,1220 670,1320 790,1410 890,1475 942,1498 1060,1410 1180,1260 1290,1120 1340,1040 1380,950 1415,860 1440,770 1458,630 1455,560 1440,490 1700,490 1700,-50"/>
              <polygon id="b3" points="-150,-50 -150,358 193,358 200,415 215,470 255,585 310,700 390,835 480,965 570,1090 670,1215 740,1305 810,1385 890,1465 942,1498 1010,1425 1080,1340 1135,1255 1190,1160 1240,1065 1280,970 1318,865 1345,760 1370,670 1380,590 1383,480 1370,400 1345,330 1700,330 1700,-50"/>
              <polygon id="b4" points="-150,-50 -150,230 315,230 328,305 350,380 385,485 430,590 520,775 620,965 730,1165 845,1360 900,1445 942,1498 1000,1410 1050,1320 1095,1225 1140,1120 1180,1010 1215,900 1245,765 1270,630 1282,480 1278,395 1265,310 1245,245 1212,176 1700,176 1700,-50"/>
              <polygon id="b5" points="-150,-50 -150,130 458,130 480,220 510,320 550,450 600,590 655,745 715,905 795,1130 875,1330 910,1420 942,1498 985,1405 1020,1310 1045,1205 1070,1100 1100,985 1125,870 1140,760 1150,650 1160,480 1157,380 1150,280 1125,190 1085,98 1700,98 1700,-50"/>
              <polygon id="b6" points="-150,-50 -150,65 617,65 655,200 700,350 730,480 765,620 790,745 820,870 870,1100 910,1310 925,1400 942,1498 955,1425 970,1350 985,1260 1000,1170 1012,1035 1020,900 1030,750 1030,620 1025,500 1015,370 1000,240 975,150 938,50 1700,50 1700,-50"/>
              <clipPath id="cp-b2"><use href="#b2"/></clipPath>
              <clipPath id="cp-b4"><use href="#b4"/></clipPath>
              <clipPath id="cp-b5"><use href="#b5"/></clipPath>
              <g id="rings">
                <g opacity=".3">
                  <ellipse cx="942" cy="915" rx="907" ry="605"/>
                  <ellipse cx="942" cy="965" rx="832" ry="555"/>
                </g>
                <g opacity=".6">
                  <ellipse cx="942" cy="1015" rx="757" ry="505"/>
                  <ellipse cx="942" cy="1070" rx="675" ry="450"/>
                </g>
                <ellipse cx="942" cy="1125" rx="592" ry="395"/>
                <ellipse cx="942" cy="1185" rx="502" ry="335"/>
                <ellipse cx="942" cy="1242" rx="417" ry="278"/>
                <ellipse cx="942" cy="1300" rx="330" ry="220"/>
                <ellipse cx="942" cy="1357" rx="245" ry="163"/>
                <ellipse cx="942" cy="1412" rx="162" ry="108"/>
                <ellipse cx="942" cy="1465" rx="82" ry="55"/>
              </g>
            </defs>
            <svg x="640" y="290" width="860" height="710" viewBox="0 0 1568 1568" preserveAspectRatio="none" class="overflowing">
              <use href="#outline" fill="#1d2562"/>
              <g clip-path="url(#cp-surface)">
                <rect x="-200" y="-100" width="2000" height="1800" fill="#4b5e92"/>
                <use href="#b1" fill="#7c8a9b"/>
                <use href="#b2" fill="#ab9682"/>
                <use href="#b3" fill="#c07f60"/>
                <use href="#b4" fill="#bf5a3e"/>
                <use href="#b5" fill="#b5352c"/>
                <use href="#b6" fill="#ab1e24"/>
                <g clip-path="url(#cp-b2)"><use href="#rings" fill="#000" fill-opacity=".014"/></g>
                <g clip-path="url(#cp-b4)"><use href="#rings" fill="#000" fill-opacity=".016"/></g>
                <g clip-path="url(#cp-b5)"><use href="#rings" fill="#000" fill-opacity=".02"/></g>
                <polygon fill="#000" fill-opacity=".05" points="400,200 458,165 617,100 780,72 938,80 1085,130 1140,160 1100,-50 400,-50"/>
              </g>
            </svg>

            <path d="M402 915 358 919" stroke="#d41818" stroke-width="1.200"/>
            <polygon points="347,920 364,914 363,924" fill="#d41818"/>
            <path d="M403 915V875" stroke="#e8e820" stroke-width="1.600"/>
            <polygon points="403,863 398,876 408,876" fill="#e8e820"/>
            <path d="M402 915 393 897" stroke="#18c018" stroke-width="1"/>
            <circle cx="394" cy="897" r="4.500" fill="#10d020"/>
            <text x="360" y="921" class="axis-label">X</text>
            <text x="405" y="876" class="axis-label">Y</text>
            <text x="397" y="898" class="axis-label small">Z</text>

            <rect x="1799" y="740" width="16" height="263" fill="url(#scale)"/>
            <g stroke="#ffffff" stroke-width="1.300">
              <path d="M1812 740.500h12M1812 761.500h12M1812 799.500h12M1812 838.500h12M1812 877.500h12M1812 915.500h12M1812 954.500h12M1812 1003.500h12"/>
            </g>
            <g class="scale-text">
              <text x="1831" y="743.500">1.5e+00</text>
              <text x="1831" y="764.500">1.4</text>
              <text x="1831" y="802.500">1.2</text>
              <text x="1831" y="841.500">1</text>
              <text x="1829" y="880.500">0.8</text>
              <text x="1829" y="918.500">0.6</text>
              <text x="1829" y="957.500">0.4</text>
              <text x="1831" y="1006.500">1.4e-01</text>
              <text transform="translate(1906 882) rotate(-90)">vt2</text>
            </g>
          </svg>
        </div>
      </div>
    </section>
  </main>

  <footer class="statusbar">
    <span class="status-x"><svg class="i12"><use href="#closeicon"/></svg></span>
    <span class="progress"></span>
  </footer>
</div>
</body>
</html>
```

FILE: styles.css
```css
* { box-sizing: border-box; }
html, body { margin: 0; height: 100%; overflow: hidden; }
body { background: #efefef; font: 12px/1.2 "DejaVu Sans", sans-serif; color: #222; }
i { font-style: normal; }
.defs { position: absolute; width: 0; height: 0; }
.app { display: flex; flex-direction: column; height: 1048px; }
.ic-c { font: italic bold 18px "DejaVu Sans", sans-serif; fill: #111; }
.ic-c2 { font: italic bold 14px "DejaVu Sans", sans-serif; fill: #111; }
.ic-t { font: italic bold 17px "DejaVu Sans", sans-serif; fill: #555; }
.ic-l { font: 10px "Liberation Sans", sans-serif; fill: #666; }
.ic-q { font: bold 13px "DejaVu Sans", sans-serif; fill: #666; }

.titlebar { flex: none; height: 30px; background: #464240; display: flex; align-items: center; justify-content: center; position: relative; }
.title-text { color: #e6e3df; font: 600 12.500px "Noto Sans", sans-serif; padding-top: 1px; }
.winbtns { position: absolute; right: 9px; top: 4px; display: flex; align-items: flex-start; }
.win-min { width: 8px; height: 2px; background: #eee; margin: 13px 24px 0 0; }
.win-max { width: 6px; height: 6px; border: 2px solid #f0f0f0; margin: 8px 17px 0 0; }
.win-close { width: 22px; height: 22px; border-radius: 50%; background: #e9761a; display: flex; align-items: center; justify-content: center; }
.win-close svg { width: 12px; height: 12px; }

.menubar { flex: none; height: 20px; display: flex; align-items: center; gap: 15px; padding: 1px 0 0 10px; border-bottom: 1px solid #d6d6d6; }
.toolbar { flex: none; height: 39px; display: flex; align-items: center; border-bottom: 1px solid #bdbdbd; background: linear-gradient(#f3f3f3, #ececec); }
.toolbar.last { height: 38px; }
.grip { flex: none; width: 17px; display: flex; justify-content: center; }
.grip.first { width: 13px; }
.grip.g16 { width: 16px; }
.grip::before { content: ""; width: 5px; height: 21px; background: radial-gradient(circle at 1px 1px, #c6c6c6 .7px, transparent 1px) 0 0 / 3px 3px; }
.tb { flex: none; width: 32px; height: 31px; display: flex; align-items: center; justify-content: center; border-radius: 3px; }
.tb.wide { width: 33px; }
.tb.on { background: #dedede; border: 1px solid #bbb; }
.i { width: 24px; height: 24px; overflow: visible; }
.i16 { width: 16px; height: 16px; flex: none; }
.i14 { width: 14px; height: 14px; flex: none; }
.i12 { width: 12px; height: 12px; flex: none; }
.i12b { width: 12px; height: 12px; flex: none; }
.sep { flex: none; width: 6px; display: flex; justify-content: center; height: 24px; }
.sep::before { content: ""; width: 1px; background: #cfcfcf; }
.time-label { flex: none; width: 36px; padding-top: 2px; }
.field { background: #fff; border: 1px solid #bbb; border-radius: 3px; display: flex; align-items: center; padding: 2px 0 0 3px; }
.time-field { flex: none; width: 125px; height: 22px; margin-right: 2px; }
.spin { flex: none; width: 39px; height: 22px; border: 1px solid #c4c4c4; border-radius: 3px; display: flex; color: #aaa; }
.spin-val { flex: 1; background: #eee; padding: 4px 0 0 4px; border-right: 1px solid #c4c4c4; }
.spin-arrows { width: 14px; display: flex; flex-direction: column; align-items: center; justify-content: center; gap: 3px; }
.spin-arrows i { width: 0; height: 0; border-left: 4px solid transparent; border-right: 4px solid transparent; }
.spin-arrows .up { border-bottom: 4px solid #ccc; }
.spin-arrows .down { border-top: 4px solid #ccc; }

.combo { flex: none; height: 23px; display: flex; align-items: center; gap: 4px; padding: 2px 0 0 4px; border: 1px solid #b8b8b8; border-radius: 3px; background: linear-gradient(#fbfbfb, #ededed); position: relative; }
.combo.off { border-color: #d0d0d0; }
.combo.off .caret { border-top-color: #c4c4c4; }
.caret { position: absolute; right: 6px; top: 9px; width: 0; height: 0; border-left: 4px solid transparent; border-right: 4px solid transparent; border-top: 4px solid #555; }
.w149 { width: 149px; }
.w78 { width: 78px; margin-left: 6px; }
.w160 { width: 160px; }

.workspace { flex: 1; min-height: 0; display: flex; }
.leftdock { flex: none; width: 298px; display: flex; flex-direction: column; padding-right: 6px; }
.dock-title { flex: none; height: 20px; display: flex; align-items: center; justify-content: space-between; padding: 2px 3px 0 4px; }
.dock-icons { display: flex; gap: 2px; margin-top: -2px; }
.tree { flex: none; height: 270px; background: #fff; border: 1px solid #bdbdbd; }
.tree-row { height: 18px; margin-top: 3px; position: relative; display: flex; align-items: center; }
.tree-line { position: absolute; left: 35px; top: -4px; width: 1px; height: 28px; background: #777; }
.tree-srv { width: 12px; height: 16px; margin-left: 29px; position: relative; }
.tree-label { margin-left: 5px; padding-top: 2px; }
.selrow { margin-top: 5px; }
.tree-eye { width: 16px; height: 12px; margin-left: 3px; flex: none; }
.tree-sel { margin-left: 7px; height: 18px; background: #308cc6; color: #e6f0f8; display: flex; align-items: center; gap: 3px; padding: 0 3px 0 1px; position: relative; }
.splitter { flex: none; height: 7px; display: flex; justify-content: center; align-items: center; }
.splitter::before { content: ""; width: 18px; height: 3px; background: radial-gradient(circle at 1px 1px, #aaa .7px, transparent .9px) 0 0 / 3px 3px; }
.tabs { flex: none; height: 26px; display: flex; align-items: flex-end; padding-left: 1px; border-bottom: 1px solid #c0c0c0; }
.tab { height: 23px; width: 92px; background: #e0e0e0; border: 1px solid #c4c4c4; border-bottom: 0; border-radius: 3px 3px 0 0; display: flex; align-items: center; justify-content: center; padding-top: 2px; }
.tab.active { height: 26px; width: 86px; background: #efefef; margin-bottom: -1px; }
.second { height: 20px; }
.action-row { flex: none; display: flex; gap: 3px; margin: 9px 0 0 9px; }
.search-row { flex: none; display: flex; gap: 3px; margin: 7px 0 0 9px; }
.btn { flex: none; height: 23px; display: flex; align-items: center; justify-content: center; gap: 1px; padding-top: 2px; border: 1px solid #bdbdbd; border-radius: 3px; background: linear-gradient(#fbfbfb, #ededed); }
.btn.off { color: #aaa; border-color: #d0d0d0; }
.btn.on { background: #dcdcdc; }
.w79 { width: 79px; }
.w27 { width: 27px; }
.w23 { width: 23px; }
.help { color: #2a8ad8; font-weight: bold; font-size: 15px; }
.search { width: 247px; height: 22px; color: #8a8a8a; }
.props-area { flex: none; display: flex; margin: 7px 0 0 9px; }
.props-col { flex: none; width: 261px; }
.props-scroll { height: 421px; overflow: hidden; }
.props-inner { width: 330px; }
.section { display: flex; gap: 5px; height: 25px; align-items: center; }
.section.s2 { margin-top: 6px; }
.section-btn { flex: none; width: 143px; height: 25px; border: 1px solid #bdbdbd; background: #f0f0f0; display: flex; align-items: center; padding: 2px 0 0 10px; gap: 8px; overflow: hidden; white-space: nowrap; }
.section-btn b { display: block; width: 103px; overflow: hidden; }
.minus { flex: none; width: 13px; height: 5px; background: #5a6fb8; border: 1px solid #1c2f78; }
.table { width: 270px; height: 93px; margin-top: 7px; border: 1px solid #bdbdbd; background: #fff; }
.thead { height: 20px; display: flex; align-items: center; gap: 2px; padding: 2px 0 0 3px; background: linear-gradient(#fafafa, #eeeeee); border-bottom: 1px solid #c4c4c4; }
.trow { height: 18px; display: flex; align-items: center; padding-left: 3px; }
.trow .i14 { margin-left: 7px; }
.tname { margin-left: 9px; }
.cb { flex: none; width: 13px; height: 13px; border: 1px solid #b4b4b4; background: #fff; display: block; border-radius: 1px; }
.cb svg { display: block; width: 11px; height: 11px; }
.form-row { display: flex; margin-top: 6px; align-items: flex-start; height: 22px; }
.form-row.r-repr { margin-top: 7px; height: 23px; }
.form-label { flex: none; width: 116px; line-height: 15px; }
.group { height: 17px; margin-top: 8px; width: 270px; font-weight: bold; line-height: 15px; padding-top: 1px; border-bottom: 1px solid #a8a8a8; }
.r-repr + .group { margin-top: 7px; }
.color-row { display: flex; gap: 5px; margin-top: 6px; }
.edit-row { display: flex; gap: 5px; margin-top: 5px; }
.slider { flex: none; width: 52px; height: 12px; margin: 5px 7px 0 1px; position: relative; }
.slider::before { content: ""; position: absolute; left: 0; right: 0; top: 4px; height: 4px; border-radius: 2px; background: #dcdcdc; border: 1px solid #b8b8b8; }
.slider.full::before { background: #3d9ad8; border-color: #2b6f9f; }
.slider i { position: absolute; top: 0; width: 12px; height: 12px; background: #f6f6f6; border: 1px solid #b4b4b4; border-radius: 3px; }
.slider.full i { right: 0; }
.slider.zero i { left: 0; }
.num { flex: none; width: 100px; height: 22px; }
.check-row { display: flex; gap: 6px; margin-top: 8px; align-items: center; height: 16px; }
.hbar { height: 13px; display: flex; background: #f6f6f6; }
.sb-btn { flex: none; width: 13px; height: 13px; display: flex; align-items: center; justify-content: center; background: #f4f4f4; border: 0 solid #d4d4d4; }
.hthumb { flex: 1; background: linear-gradient(#fafafa, #f0f0f0); border-left: 1px solid #ccc; }
.htrough { flex: none; width: 11px; background: #e2e2e2; border-right: 1px solid #ccc; }
.vbar { flex: none; width: 14px; height: 421px; display: flex; flex-direction: column; }
.vthumb { height: 210px; background: linear-gradient(90deg, #fafafa, #f0f0f0); }
.vtrough { flex: 1; background: #e3e3e3; }
.vbar .sb-btn { width: 14px; height: 14px; }
.tri-l, .tri-r, .tri-u, .tri-d { width: 0; height: 0; }
.tri-l { border-top: 4px solid transparent; border-bottom: 4px solid transparent; border-right: 4px solid #555; }
.tri-r { border-top: 4px solid transparent; border-bottom: 4px solid transparent; border-left: 4px solid #555; }
.tri-u { border-left: 4px solid transparent; border-right: 4px solid transparent; border-bottom: 4px solid #555; }
.tri-d { border-left: 4px solid transparent; border-right: 4px solid transparent; border-top: 4px solid #555; }

.center { flex: 1; min-width: 0; display: flex; flex-direction: column; }
.layout-tabs { flex: none; height: 28px; display: flex; align-items: flex-end; padding-left: 1px; border-bottom: 1px solid #bdbdbd; }
.ltab { height: 24px; width: 33px; background: #e6e6e6; border: 1px solid #c4c4c4; border-bottom: 0; border-radius: 3px 3px 0 0; display: flex; align-items: center; justify-content: center; font-size: 14px; }
.ltab.active { height: 27px; width: 116px; background: #fff; font-size: 12px; gap: 5px; padding: 1px 0 0 0; margin-bottom: -1px; justify-content: flex-start; padding-left: 10px; }
.view-panel { flex: 1; min-height: 0; background: #fff; display: flex; flex-direction: column; border-left: 1px solid #c4c4c4; border-right: 1px solid #c4c4c4; padding-left: 2px; }
.view-bar { flex: none; height: 21px; display: flex; align-items: center; padding-bottom: 3px; margin-left: -1px; }
.vb { flex: none; width: 20px; height: 18px; display: flex; align-items: center; justify-content: center; }
.vb.txt { font-size: 10px; color: #333; }
.vsep { flex: none; width: 6px; display: flex; justify-content: center; height: 12px; }
.vsep::before { content: ""; width: 1px; background: #bbb; }
.view-name { margin-left: auto; margin-right: 12px; font-weight: bold; text-decoration: underline; color: #111; }
.vbtn { flex: none; width: 20px; height: 18px; margin-right: 1px; display: flex; align-items: center; justify-content: center; border: 1px solid #c4c4c4; border-radius: 3px; background: linear-gradient(#fbfbfb, #eeeeee); }
.vbtn.dim svg { opacity: .7; }
.viewport { flex: none; width: 1617px; height: 802px; border: 2px solid #0000f0; padding: 1px; background: #fff; }
.scene { display: block; width: 1611px; height: 796px; background: #52576e; }
.overflowing { overflow: visible; }
.axis-label { font: 18px "Liberation Sans", sans-serif; fill: #fff; }
.axis-label.small { font-size: 14px; }
.scale-text text { font: 16px "Liberation Sans", sans-serif; fill: #e6e7ec; }

.statusbar { flex: none; height: 30px; display: flex; align-items: center; padding-left: 962px; border-top: 1px solid #c4c4c4; }
.status-x { width: 17px; height: 16px; display: flex; align-items: center; justify-content: center; border: 1px solid #d4d4d4; border-radius: 2px; opacity: .75; }
.progress { width: 933px; height: 22px; margin-left: 2px; border: 1px solid #c0c0c0; border-radius: 3px; background: #efefef; }
```
